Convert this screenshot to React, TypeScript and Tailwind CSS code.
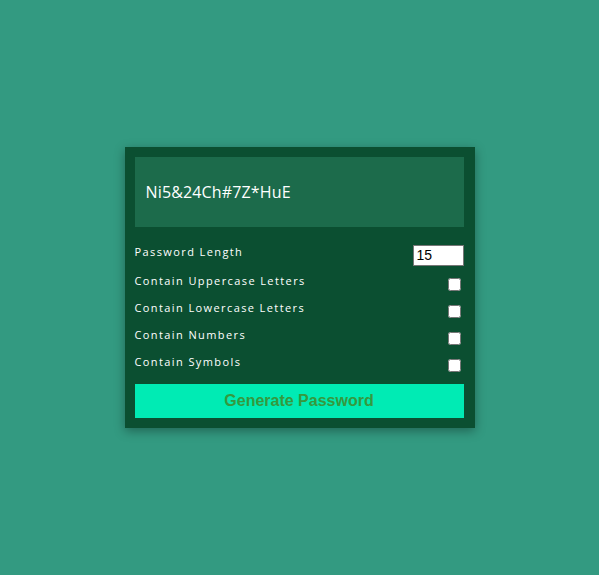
import { useState } from 'react'

const options = [
  'Contain Uppercase Letters',
  'Contain Lowercase Letters',
  'Contain Numbers',
  'Contain Symbols',
]

export default function App() {
  const [length, setLength] = useState('15')
  const [checked, setChecked] = useState<boolean[]>([false, false, false, false])

  return (
    <main className="min-h-screen h-[575px] bg-[#339a81] flex items-center justify-center">
      <div className="w-[350px] bg-[#0b4f31] pt-[10px] pb-[10px] pl-[10px] pr-[11px] shadow-[0_3px_10px_rgba(0,0,0,0.35)]">
        {/* result */}
        <div className="h-[70px] bg-[#1c6b4b] flex items-center px-[11px] pb-[1px]">
          <span className="text-white text-[16px] tracking-[0.15px] font-['Open_Sans',sans-serif]">Ni5&amp;24Ch#7Z*HuE</span>
        </div>

        {/* settings */}
        <div className="mt-[18px] font-['Open_Sans',sans-serif]">
          <div className="h-[27px] flex items-start justify-between">
            <label className="text-white text-[11px] leading-[14px] tracking-[1.4px]">Password Length</label>
            <input
              type="number"
              value={length}
              onChange={e => setLength(e.target.value)}
              className="w-[51px] h-[21px] bg-white border border-[#767676] px-[3px] text-[14px] text-black font-['Liberation_Sans',Arial,sans-serif] outline-none [appearance:textfield] [&::-webkit-inner-spin-button]:appearance-none"
            />
          </div>
          {options.map((o, i) => (
            <div key={o} className="h-[27px] flex items-start justify-between">
              <label className="text-white text-[11px] leading-[18px] tracking-[1.4px]">{o}</label>
              <input
                type="checkbox"
                checked={checked[i]}
                onChange={() => setChecked(prev => prev.map((c, j) => (j === i ? !c : c)))}
                className="w-[13px] h-[13px] mt-[6px] mr-[3px] m-0"
              />
            </div>
          ))}
        </div>

        <button className="mt-[4px] w-full h-[34px] bg-[#00ebb4] text-[#35993e] text-[16px] font-bold font-['Liberation_Sans',Arial,sans-serif]">
          Generate Password
        </button>
      </div>
    </main>
  )
}
